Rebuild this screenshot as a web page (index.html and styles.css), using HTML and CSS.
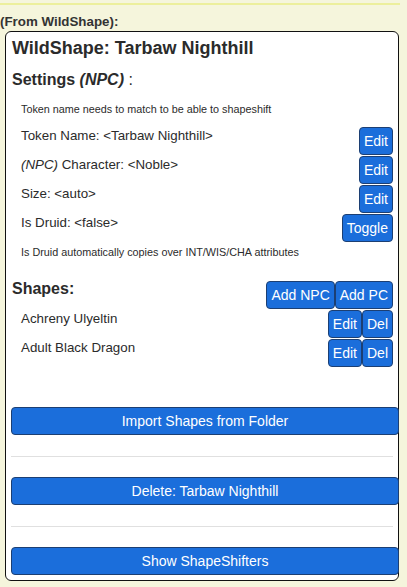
FILE: index.html
```html
<!DOCTYPE html>
<html>
<head>
<meta charset="utf-8">
<link rel="stylesheet" href="styles.css">
</head>
<body>
<div class="page">
  <div class="topline"></div>
  <div class="from">(From WildShape):</div>
  <div class="card">
    <div class="title">WildShape: Tarbaw Nighthill</div>
    <div class="h2">Settings <i>(NPC)</i> <span class="colon">:</span></div>
    <div class="note note1">Token name needs to match to be able to shapeshift</div>
    <div class="row"><span class="label">Token Name: &lt;Tarbaw Nighthill&gt;</span><span class="btns"><button class="btn">Edit</button></span></div>
    <div class="row"><span class="label"><i>(NPC)</i> Character: &lt;Noble&gt;</span><span class="btns"><button class="btn">Edit</button></span></div>
    <div class="row"><span class="label">Size: &lt;auto&gt;</span><span class="btns"><button class="btn">Edit</button></span></div>
    <div class="row"><span class="label">Is Druid: &lt;false&gt;</span><span class="btns"><button class="btn">Toggle</button></span></div>
    <div class="note note2">Is Druid automatically copies over INT/WIS/CHA attributes</div>
    <div class="shapes-head"><span class="h2 shapes-title">Shapes:</span><span class="btns head-btns"><button class="btn">Add NPC</button><button class="btn">Add PC</button></span></div>
    <div class="row"><span class="label">Achreny Ulyeltin</span><span class="btns"><button class="btn">Edit</button><button class="btn">Del</button></span></div>
    <div class="row"><span class="label">Adult Black Dragon</span><span class="btns"><button class="btn">Edit</button><button class="btn">Del</button></span></div>
    <button class="btn wide first">Import Shapes from Folder</button>
    <hr class="sep">
    <button class="btn wide">Delete: Tarbaw Nighthill</button>
    <hr class="sep">
    <button class="btn wide">Show ShapeShifters</button>
  </div>
</div>
</body>
</html>
```

FILE: styles.css
```css
html, body {
  margin: 0;
  padding: 0;
  background: #f5f5dc;
}
body {
  font-family: "Liberation Sans", Arial, sans-serif;
  color: #2b2b2b;
  width: 407px;
  height: 587px;
  overflow: hidden;
}
.page {
  width: 400px;
  padding-top: 3px;
}
.topline {
  height: 2px;
  background: #ecef9c;
}
.from {
  margin-top: 9px;
  font-size: 13.33px;
  font-weight: bold;
  line-height: 16px;
  color: #333;
}
.card {
  margin: 1px 0 0 5px;
  width: 394px;
  box-sizing: border-box;
  background: #fff;
  border: 1px solid #111;
  border-radius: 6px;
  padding: 5px 5px 5px 5px;
}
.title {
  font-size: 18px;
  font-weight: bold;
  line-height: 22px;
  color: #2b2b2b;
  padding-left: 1px;
}
.h2 {
  font-size: 16px;
  font-weight: bold;
  line-height: 20px;
  color: #2b2b2b;
  padding-left: 1px;
}
.card > .h2 {
  margin-top: 11px;
}
.colon {
  font-weight: normal;
}
.note {
  font-size: 10.8px;
  line-height: 14px;
  padding-left: 10px;
  color: #2b2b2b;
}
.note1 {
  margin-top: 12px;
  margin-bottom: 11px;
}
.note2 {
  margin-top: 2px;
}
.row {
  display: flex;
  justify-content: space-between;
  align-items: flex-start;
  height: 29px;
}
.label {
  font-size: 13.33px;
  line-height: 16px;
  padding-left: 10px;
  padding-top: 1px;
  color: #2b2b2b;
}
.btns {
  display: flex;
}
.btn {
  font-family: "Liberation Sans", Arial, sans-serif;
  font-size: 14px;
  line-height: 16px;
  color: #fff;
  background: #1b6edb;
  border: 1px solid #1c3f73;
  border-radius: 4px;
  padding: 5px 4px;
  margin: 0;
  height: 28px;
  box-sizing: border-box;
}
.shapes-head {
  display: flex;
  justify-content: space-between;
  align-items: flex-start;
  margin-top: 20px;
  height: 31px;
}
.head-btns {
  margin-top: 2px;
}
.wide {
  display: block;
  width: 388px;
  font-size: 14px;
  text-align: center;
}
.first {
  margin-top: 39px;
}
.sep {
  border: 0;
  border-top: 1px solid #e0e0e0;
  margin: 21px 0 20px;
  height: 0;
}
```
